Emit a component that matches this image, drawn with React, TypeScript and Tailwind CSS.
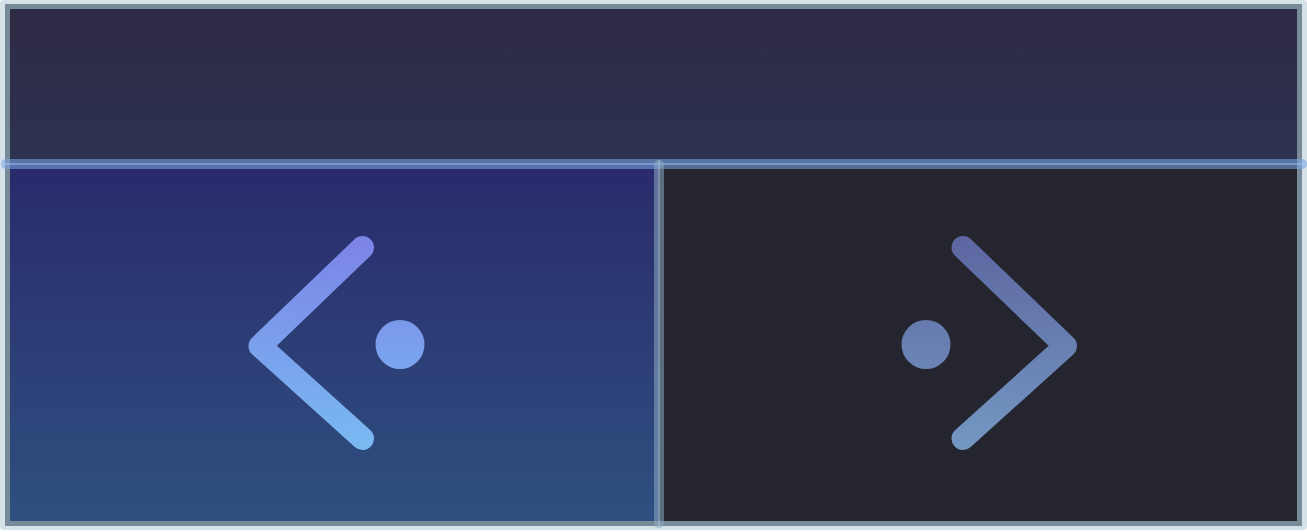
import React from "react";

function Chevron({ dir, from, to, id }: { dir: "left" | "right"; from: string; to: string; id: string }) {
  const path = dir === "left" ? "M127.5 14.5 L25 113 L127.5 205.5" : "M85 14.5 L187.5 113 L85 205.5";
  const cx = dir === "left" ? 165 : 48;
  return (
    <svg width="200" height="220" viewBox="0 0 200 220" className="block">
      <defs>
        <linearGradient id={id} x1="0" y1="0" x2="0" y2="220" gradientUnits="userSpaceOnUse">
          <stop offset="0" stopColor={from} />
          <stop offset="1" stopColor={to} />
        </linearGradient>
      </defs>
      <path d={path} fill="none" stroke={`url(#${id})`} strokeWidth="23" strokeLinecap="round" strokeLinejoin="round" />
      <circle cx={cx} cy="111.5" r="24.5" fill={`url(#${id})`} />
    </svg>
  );
}

export default function App() {
  return (
    <div className="relative h-[530px] w-full rounded-[4px] bg-[#d4e1e7] px-[5px] py-[4px]">
      <div className="grid h-full grid-rows-[155px_1fr] border-[5px] border-[#788a98]">
        <div className="bg-gradient-to-b from-[#2f2a45] to-[#2c3351]" />
        <div className="grid grid-cols-[649px_1fr]">
          <div className="flex items-center justify-center bg-gradient-to-b from-[#292a6b] to-[#2e5080]">
            <Chevron dir="left" from="#7c82e6" to="#79bbf2" id="gl" />
          </div>
          <div className="flex items-center justify-center bg-[#25252f]">
            <Chevron dir="right" from="#5d65a0" to="#7399c3" id="gr" />
          </div>
        </div>
      </div>
      <div className="absolute left-[1px] right-0 top-[159px] flex h-[10px] items-center rounded-full bg-[rgba(120,165,230,0.58)]">
        <div className="h-[2px] w-full bg-[rgba(170,200,240,0.45)]" />
      </div>
      <div className="absolute bottom-[2px] left-[654px] top-[160px] flex w-[10px] justify-center rounded-full bg-[rgba(140,170,195,0.55)]">
        <div className="h-full w-[2px] bg-[rgba(180,205,225,0.35)]" />
      </div>
    </div>
  );
}
